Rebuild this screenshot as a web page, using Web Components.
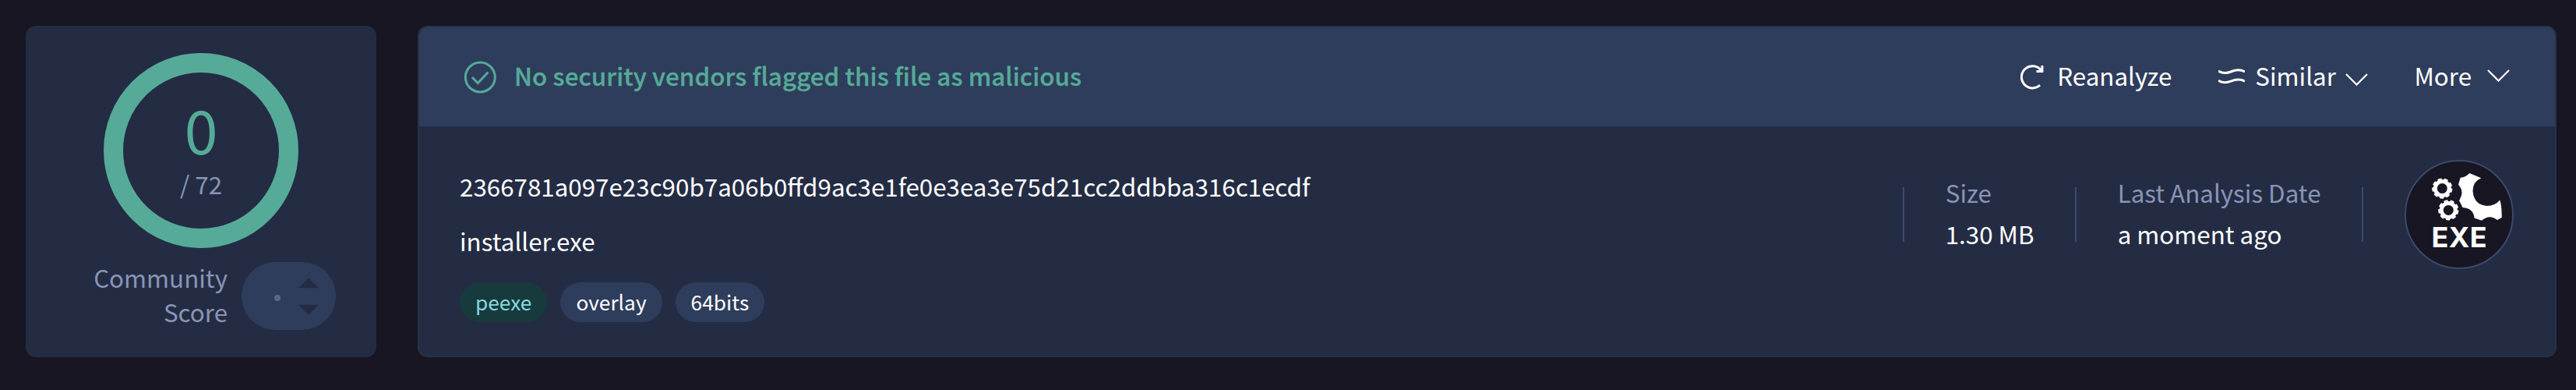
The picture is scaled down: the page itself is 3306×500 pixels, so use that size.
<!DOCTYPE html>
<html lang="en">
<head>
<meta charset="utf-8">
<title>File report</title>
<style>
html,body{margin:0;background:#171622;}
body{width:3306px;height:500px;overflow:hidden;font-family:"Noto Sans CJK SC",sans-serif;font-size:31.33px;color:#fff}
</style>
</head>
<body>
<vt-report></vt-report>
<script>
const define=(name,html)=>customElements.define(name,class extends HTMLElement{
  constructor(){super();const t=document.createElement('template');t.innerHTML=html;this.attachShadow({mode:'open'}).appendChild(t.content.cloneNode(true));}
});

define('vt-ring',`<style>
:host{display:flex;flex-direction:column;align-items:center;box-sizing:border-box;width:250px;height:250px;border:25px solid #56ab98;border-radius:50%;color:#56ab98}
.n{font-size:77px;line-height:81px;margin-top:31px}
.t{line-height:41px;color:#8995b5;margin-top:10px}
</style><div class="n"><slot></slot></div><div class="t"><slot name="total"></slot></div>`);

define('vt-votes',`<style>
:host{display:flex;flex:none;align-items:center;box-sizing:border-box;width:121px;height:87px;border-radius:43.5px;background:#2f3d5c;padding:0 22px 0 42px;justify-content:space-between}
i{width:8px;height:8px;border-radius:50%;background:#5c6780;margin-top:4px}
svg{display:block;width:26px;height:48px}
</style><i></i><svg viewBox="0 0 26 48" fill="#242c44"><path d="M0 13.3 13 .3l13 13zM0 34.7l13 13 13-13z"/></svg>`);

define('vt-score-card',`<style>
:host{display:flex;flex-direction:column;align-items:center;box-sizing:border-box;width:450px;height:425px;padding-top:35px;border-radius:13px;background:#242c44}
.c{display:flex;justify-content:flex-end;align-items:flex-start;gap:18px;margin-top:18px;align-self:flex-end;padding-right:52px}
.l{text-align:right;color:#8995b5;line-height:44px;margin-top:-2px}
</style><vt-ring>0<span slot="total">/ 72</span></vt-ring><div class="c"><div class="l">Community<br>Score</div><vt-votes></vt-votes></div>`);

define('vt-tag',`<style>
:host{display:block;box-sizing:border-box;height:51px;border-radius:26px;background:#2f3d5c;padding:0 20px;font-size:26.3px;line-height:49px}
:host([kind=type]){background:#173a3c;color:#86d9e3}
</style><slot></slot>`);

define('vt-stat',`<style>
:host{display:block;line-height:53px}
div{color:#8995b5}
</style><div><slot name="label"></slot></div><slot></slot>`);

define('vt-action',`<style>:host{display:flex;align-items:center;line-height:48px}::slotted(span){padding-bottom:4px}</style><slot></slot>`);

define('vt-file-icon',`<style>
:host{display:block;flex:none;width:140px;height:140px}svg{display:block}
text{font:700 36px Inter,sans-serif;letter-spacing:.4px}
</style><svg width="140" height="140" viewBox="0 0 140 140"><circle cx="70" cy="70" r="69" fill="#171622" stroke="#3b4a6c" stroke-width="2"/>
<g fill="#fff"><g fill="none" stroke="#fff"><circle cx="48.300" cy="36.600" r="9" stroke-width="5"/><circle cx="48.300" cy="36.600" r="11.600" stroke-width="3" stroke-dasharray="5 3.098"/><circle cx="56.300" cy="64.400" r="9" stroke-width="5"/><circle cx="56.300" cy="64.400" r="11.600" stroke-width="3" stroke-dasharray="5 3.098"/></g>
<path d="M83.300 17L98.300 23.300Q87.500 28 87.500 40Q89 58 105.700 59Q116 59 122.300 51.500Q125 60 124.700 74L119 77Q109 69 99 77.700L89.500 74.500Q88.500 62 74.500 61L70 52Q77.500 41 69 31.700L71.700 22.800Q79 22 83.300 17Z"/>
<text x="70.200" y="112" text-anchor="middle">EXE</text></g></svg>`);

define('vt-file-card',`<style>
:host{display:block;box-sizing:border-box;width:2745px;height:425px;border:2px solid #27324b;border-radius:13px;background:#242c44;overflow:hidden}
header{display:flex;align-items:center;height:127px;background:#2f3d5c;padding-left:57px}
header svg{display:block;flex:none}
.title{margin-left:23px;color:#56ab98;font-weight:500;letter-spacing:.08px;-webkit-text-stroke:.3px #56ab98;flex:1;line-height:48px;padding-bottom:4px}
.body{display:flex;padding-left:52px}
.info{flex:1;padding-top:50px}
.line{line-height:53px;height:70px}
.tags{display:flex;gap:17px;margin-top:10px}
.stats{display:flex;padding-top:78px}
hr{border:0;margin:0;width:2px;height:70px;background:#3b4a6c}
</style>
<header><svg width="42" height="42" viewBox="0 0 42 42" fill="none" stroke="#56ab98" stroke-width="3"><circle cx="21.300" cy="21" r="19"/><path d="m11 21 7.200 7.500L31.500 14.500"/></svg><div class="title">No security vendors flagged this file as malicious</div>
<vt-action><svg width="30" height="32" viewBox="0 0 30 32" fill="none" stroke="#fff" stroke-width="3"><path d="M25 26.200A14.100 14.100 0 1 1 26.700 7.300"/><path d="M27.900 1V8.600H20.500"/></svg><span style="margin-left:17.500px">Reanalyze</span></vt-action>
<vt-action style="margin-left:60px"><svg style="margin-top:-2px" width="34" height="20" viewBox="0 0 34 20" fill="none" stroke="#fff" stroke-width="3"><path d="M0 3C4 5.500 10 6.500 16 4S28 .500 34 4M0 15.200C4 17.700 10 18.700 16 16.200S28 12.700 34 16.200"/></svg><span style="margin-left:13px">Similar</span><svg style="margin:6px 0 0 12.500px" width="29" height="16" viewBox="0 0 29 16" fill="none" stroke="#fff" stroke-width="2.200"><path d="m1 1 13.500 13.500L28 1"/></svg></vt-action>
<vt-action style="margin:0 58px 0 59px"><span>More</span><svg style="margin:-4px 0 0 20px" width="29" height="16" viewBox="0 0 29 16" fill="none" stroke="#fff" stroke-width="2.200"><path d="m1 1 13.500 13.500L28 1"/></svg></vt-action></header>
<div class="body"><div class="info"><div class="line">2366781a097e23c90b7a06b0ffd9ac3e1fe0e3ea3e75d21cc2ddbba316c1ecdf</div><div class="line">installer.exe</div><div class="tags"><vt-tag kind="type">peexe</vt-tag><vt-tag>overlay</vt-tag><vt-tag>64bits</vt-tag></div></div>
<div class="stats"><hr><vt-stat style="margin:-20px 52.500px 0 52.500px"><span slot="label">Size</span>1.30 MB</vt-stat><hr><vt-stat style="margin:-20px 52.500px 0 52.500px"><span slot="label">Last Analysis Date</span>a moment ago</vt-stat><hr><vt-file-icon style="margin:-35px 53px 0 53px"></vt-file-icon></div></div>`);

define('vt-report',`<style>:host{display:flex;gap:53px;padding:33px 0 0 33px}vt-score-card,vt-file-card{flex:none}</style><vt-score-card></vt-score-card><vt-file-card></vt-file-card>`);
</script>
</body>
</html>
